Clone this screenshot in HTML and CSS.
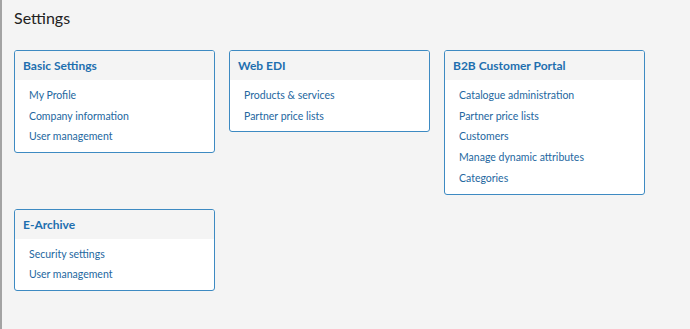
FILE: index.html
```html
<!DOCTYPE html>
<html lang="en">
<head>
  <meta charset="utf-8">
  <title>Settings</title>
  <link rel="stylesheet" href="styles.css">
</head>
<body>
  <main class="page">
    <h1 class="page-title">Settings</h1>
    <div class="cards">
      <section class="card">
        <h2 class="card-title">Basic Settings</h2>
        <ul class="card-links">
          <li><a href="#">My Profile</a></li>
          <li><a href="#">Company information</a></li>
          <li><a href="#">User management</a></li>
        </ul>
      </section>
      <section class="card">
        <h2 class="card-title">Web EDI</h2>
        <ul class="card-links">
          <li><a href="#">Products &amp; services</a></li>
          <li><a href="#">Partner price lists</a></li>
        </ul>
      </section>
      <section class="card">
        <h2 class="card-title">B2B Customer Portal</h2>
        <ul class="card-links">
          <li><a href="#">Catalogue administration</a></li>
          <li><a href="#">Partner price lists</a></li>
          <li><a href="#">Customers</a></li>
          <li><a href="#">Manage dynamic attributes</a></li>
          <li><a href="#">Categories</a></li>
        </ul>
      </section>
      <section class="card">
        <h2 class="card-title">E-Archive</h2>
        <ul class="card-links">
          <li><a href="#">Security settings</a></li>
          <li><a href="#">User management</a></li>
        </ul>
      </section>
    </div>
  </main>
</body>
</html>
```

FILE: styles.css
```css
*, *::before, *::after {
  margin: 0;
  padding: 0;
  box-sizing: border-box;
}

html,
body {
  height: 100%;
}

body {
  background-color: #F4F4F4;
  color: #222222;
  font-family: "Lato", sans-serif;
}

a {
  color: inherit;
  text-decoration: none;
}

.page {
  min-height: 100%;
  padding: 8px 14px 20px 12px;
  border-left: 2px solid #A3A3A3;
}

.page-title {
  font-size: 16px;
  font-weight: 400;
  line-height: 20px;
  margin-bottom: 22px;
}

.cards {
  display: grid;
  grid-template-columns: repeat(3, 201px);
  column-gap: 14px;
  row-gap: 14px;
  align-items: start;
}

.card {
  border: 1px solid #3D8AC2;
  border-radius: 3px;
  background-color: #FFFFFF;
  overflow: hidden;
}

.card-title {
  padding: 7px 8px 6px;
  background-color: #F4F4F4;
  color: #1E6FAF;
  font-size: 12px;
  font-weight: 700;
  line-height: 16px;
}

.card-links {
  list-style: none;
  padding: 5px 14px 5px;
}

.card-links li {
  font-size: 10.5px;
  line-height: 20.7px;
  color: #2467A0;
}
```
